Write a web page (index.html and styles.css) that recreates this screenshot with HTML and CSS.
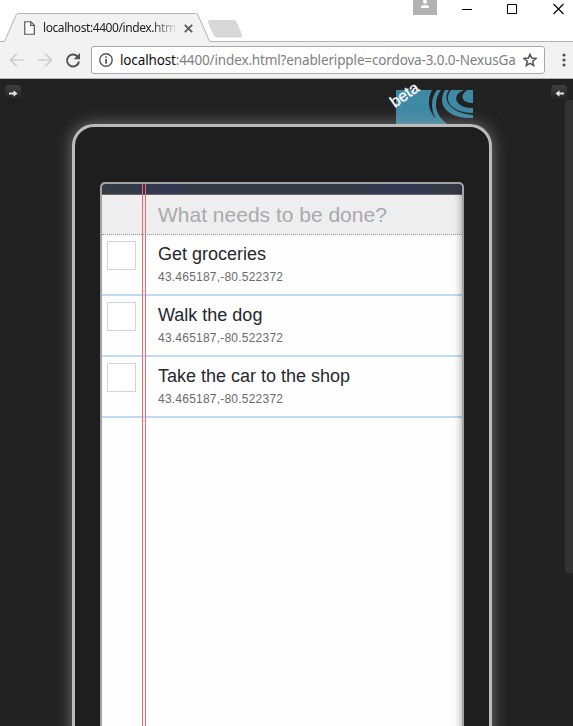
FILE: index.html
```html
<!DOCTYPE html>
<html lang="en">
<head>
<meta charset="utf-8">
<title>localhost:4400/index.html</title>
<link rel="stylesheet" href="styles.css">
</head>
<body>
<div class="window">
  <header class="titlebar">
    <svg class="tab-shape" width="573" height="42" viewBox="0 0 573 42">
      <path d="M0 41.5H4.5L16 15Q16.800 13.500 18.500 13.500H195.500Q197.200 13.500 198 15L209 40Q209.600 41.500 211 41.500H573V42H0Z" fill="#f2f2f2"/>
      <path d="M0 41.5H4.500L16 15Q16.800 13.500 18.500 13.500H195.500Q197.200 13.500 198 15L209 40Q209.600 41.500 211 41.500H573" fill="none" stroke="#b2b2b2"/>
      <path d="M210 20.500H233.500Q235.500 20.500 236.400 22.500L241.500 34.500Q242.300 37 240 37H217Q215 37 214 35L208.500 22.500Q208 20.500 210 20.500Z" fill="#d8d8d8" stroke="#cbcbcb" stroke-width=".7"/>
    </svg>
    <div class="tab">
      <svg width="12" height="14" viewBox="0 0 12 14"><path d="M.75.75H7L10.300 4.200V13.250H.75ZM6.700.75V4.500H10.300" fill="#fff" stroke="#555" stroke-width="1.200"/></svg>
      <span class="tab-title">localhost:4400/index.htm</span>
      <svg class="tab-close" width="9" height="9" viewBox="0 0 9 9"><path d="M.8.8 8.200 8.200M8.200.8.800 8.200" stroke="#555" stroke-width="1.700"/></svg>
    </div>
    <div class="controls">
      <svg class="profile" width="24" height="15" viewBox="0 0 24 15"><path fill="#b2b2b2" d="M0 0H24V15H0z"/><circle cx="12" cy="1.700" r="2" fill="#fff"/><path d="M8 8V6.800Q8 5 12 5T16 6.800V8Z" fill="#fff"/></svg>
      <svg width="10" height="15" viewBox="0 0 10 15"><path d="M0 9.500H10" stroke="#000"/></svg>
      <svg width="10" height="15" viewBox="0 0 10 15"><path d="M.5 4.500H9.500V13.500H.5Z" fill="none" stroke="#000"/></svg>
      <svg width="11" height="15" viewBox="0 0 11 15"><path d="M.5 4 10.500 14M10.500 4 .5 14" stroke="#000" stroke-width="1.100"/></svg>
    </div>
  </header>
  <nav class="toolbar">
    <svg width="82" height="20" viewBox="0 0 82 20" fill="none">
      <path d="M24 10H11M17 3.500 10.500 10 17 16.500M38 10H51M45 3.500 51.500 10 45 16.500" stroke="#cecece" stroke-width="1.700"/>
      <path d="M77.500 6.400A6 6 0 1 0 79 11.500" stroke="#555" stroke-width="2"/>
      <path d="M80 3V9.300H73.700Z" fill="#555"/>
    </svg>
    <div class="omnibox">
      <svg width="14" height="14" viewBox="0 0 14 14"><circle cx="7" cy="7" r="6.200" fill="none" stroke="#555" stroke-width="1.400"/><path d="M6.200 3.200H7.900V4.800H6.200ZM6.200 6H7.900V10.800H6.200Z" fill="#555"/></svg>
      <span class="url"><b>localhost</b>:4400/index.html?enableripple=cordova-3.0.0-NexusGa</span>
      <svg class="star" width="14" height="14" viewBox="0 0 14 14"><path d="M7 1.200 8.600 5.100 13 5.500 9.700 8.300 10.700 12.500 7 10.300 3.300 12.500 4.300 8.300 1 5.500 5.400 5.100Z" fill="none" stroke="#555" stroke-width="1.500"/></svg>
    </div>
    <svg class="menu" width="4" height="14" viewBox="0 0 4 14" fill="#555"><circle cx="2" cy="2" r="1.600"/><circle cx="2" cy="7" r="1.600"/><circle cx="2" cy="12" r="1.600"/></svg>
  </nav>
  <main class="stage">
    <div class="panel-toggle left"><svg width="9" height="7" viewBox="0 0 9 7"><path d="M0 2.600H4.500V.3L8.500 3.500 4.500 6.700V4.400H0Z" fill="#e4e4e4"/></svg></div>
    <div class="panel-toggle right"><svg width="9" height="7" viewBox="0 0 9 7"><path d="M9 2.600H4.500V.3L.5 3.500 4.500 6.700V4.400H9Z" fill="#e4e4e4"/></svg></div>
    <div class="scrollbar"></div>
    <div class="logo">
      <svg width="77" height="36" viewBox="0 0 77 36">
        <g fill="#3e89a5">
          <path d="M0 0H36C31 9 32 21 40 29C35 20 34 9 41 0H45C37 11 38 26 53 35V36H0Z"/>
          <path d="M49 0H53C46 10 54 23 77 25V28C52 29 40 15 49 0Z"/>
          <path d="M55 0H68C61 3 58 8 62 13Q66 18 77 18V23C57 23 46 11 55 0Z"/>
          <path d="M71 0H77V13C66 13 63 6 71 0Z"/>
        </g>
      </svg>
      <span>beta</span>
    </div>
    <section class="device">
      <div class="screen">
        <div class="strip"></div>
        <div class="new-task">What needs to be done?</div>
        <ul class="tasks">
          <li><i class="check"></i><div><h2>Get groceries</h2><p>43.465187,-80.522372</p></div></li>
          <li><i class="check"></i><div><h2>Walk the dog</h2><p>43.465187,-80.522372</p></div></li>
          <li><i class="check"></i><div><h2>Take the car to the shop</h2><p>43.465187,-80.522372</p></div></li>
        </ul>
        <div class="margin-rule"></div>
      </div>
    </section>
  </main>
</div>
</body>
</html>
```
FILE: styles.css
```css
* { box-sizing: border-box; }
body { margin: 0; overflow: hidden; font-family: "Liberation Sans", sans-serif; }
svg { display: block; flex: none; }
.window { width: 573px; height: 726px; display: flex; flex-direction: column; overflow: hidden; background: #fff; }
.titlebar { position: relative; height: 42px; flex: none; display: flex; justify-content: space-between; }
.tab-shape { position: absolute; left: 0; top: 0; }
.tab { position: relative; display: flex; align-items: center; height: 28px; margin: 14px 0 0 24px; }
.tab-title { width: 132px; margin-left: 7px; overflow: hidden; white-space: nowrap; font: 12px/20px "Noto Sans", sans-serif; letter-spacing: -0.42px; color: #222; -webkit-mask-image: linear-gradient(90deg, #000 108px, transparent 136px); mask-image: linear-gradient(90deg, #000 108px, transparent 136px); }
.tab-close { margin-left: 9px; }
.controls { display: flex; align-items: flex-start; padding-right: 9px; }
.profile { margin-right: 25px; }
.controls svg:nth-child(2) { margin-right: 35px; }
.controls svg:nth-child(3) { margin-right: 36px; }
.toolbar { height: 37px; flex: none; display: flex; align-items: center; background: #f2f2f2; border-bottom: 1px solid #b6b6b6; }
.omnibox { width: 454px; height: 28px; margin-left: 9px; padding: 0 7px; display: flex; align-items: center; background: #fff; border: 1px solid #a9a9a9; border-radius: 3px; }
.url { width: 403px; margin-left: 7px; white-space: nowrap; font: 13.5px/24px "Noto Sans", sans-serif; letter-spacing: -0.14px; color: #808080; }
.url b { font-weight: 400; color: #111; }
.menu { margin-left: 17px; }
.stage { position: relative; flex: 1; overflow: hidden; background: #222; padding: 45px 81px 0 72px; }
.panel-toggle { position: absolute; top: 6px; width: 16px; height: 17px; display: flex; align-items: center; justify-content: center; border-radius: 4px; background: linear-gradient(#404040, #1c1c1c); }
.left { left: 5px; }
.right { right: 6px; }
.scrollbar { position: absolute; right: 0; top: 21px; width: 8px; height: 473px; border-radius: 4px 0 0 4px; background: #333; }
.logo { position: absolute; left: 396px; top: 11px; }
.logo span { position: absolute; left: -7px; top: -4px; font-size: 16px; line-height: 18px; color: #fff; transform: rotate(-35deg); -webkit-text-stroke: .3px #fff; }
.device { position: relative; width: 420px; height: 720px; padding: 55px 25px 0; background: #1e1e1e; border: 3px solid #bbb; border-radius: 22px; box-shadow: 0 0 16px rgba(170, 170, 170, .6); }
.screen { position: relative; height: 660px; background: #fefefe; border: 2px solid #a3a3a3; border-radius: 5px; overflow: hidden; }
.screen::after { content: ""; position: absolute; inset: 0; box-shadow: inset -7px 0 8px -7px rgba(0, 0, 0, .4); }
.strip { height: 11px; border-bottom: 1px solid #70616a; background: linear-gradient(90deg, #343b45 0 34px, #343850 34px 84px, #343b45 84px 264px, #343850 264px 329px, #343b45 329px); }
.new-task { height: 40px; padding-left: 56px; background: #eee; border-bottom: 1px dotted #999; font-size: 21px; line-height: 40px; color: #a9a9ae; }
.tasks { margin: 0; padding: 0; list-style: none; }
.tasks li { display: flex; height: 61px; padding: 6px 0 0 5px; border-bottom: 2px solid #bfdaf1; }
.check { flex: none; width: 29px; height: 29px; margin-right: 22px; border: 1px solid #d4d4d4; background: #fff; }
h2 { margin: 2px 0 0; font-size: 18px; line-height: 22px; font-weight: 400; color: #25282d; }
p { margin: 5px 0 0; font-size: 12px; line-height: 14px; letter-spacing: .22px; color: #6b6b6b; }
.margin-rule { position: absolute; left: 40px; top: 0; bottom: 0; width: 4px; border: solid #f2666a; border-width: 0 1px; }
```
